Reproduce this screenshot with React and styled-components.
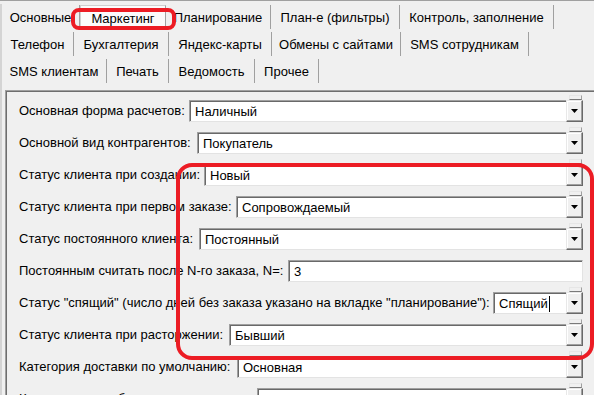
import React from 'react';
import styled, { createGlobalStyle } from 'styled-components';

const Global = createGlobalStyle`
  html, body { margin: 0; padding: 0; background: #f0f0f0; }
  body {
    font-family: "Liberation Sans", Arial, sans-serif;
    font-size: 13px;
    color: #000;
    overflow: hidden;
  }
  * { box-sizing: border-box; }
`;

const Root = styled.div`
  position: relative;
  width: 594px;
  height: 395px;
  overflow: hidden;
  background: #f0f0f0;
  border-top: 1px solid #a0a0a0;
`;

const Frame = styled.div`
  margin-top: 3px;
  height: 100%;
  border-left: 2px solid #d4d4d4;
`;

const TabRow = styled.div`
  display: flex;
  height: 27px;
`;

const Tab = styled.div`
  flex: 0 0 auto;
  width: ${(p) => p.$w}px;
  height: 24px;
  margin-top: 1px;
  padding-top: 2px;
  line-height: 21px;
  text-align: center;
  white-space: nowrap;
  border-right: 1px solid #a0a0a0;
  background: ${(p) => (p.$active ? '#fbfbfb' : 'transparent')};
  ${(p) => p.$active && 'border-left: 1px solid #d0d0d0; border-top: 1px solid #d0d0d0;'}
`;

const Panel = styled.div`
  margin: 5px 0 0 3px;
  border-top: 1px solid #a0a0a0;
  border-left: 1px solid #a0a0a0;
  box-shadow: inset 1px 1px 0 #6e6e6e;
  padding: 9px 11px 0 13px;
  display: flex;
  flex-direction: column;
  gap: 10px;
`;

const Row = styled.div`
  display: flex;
  align-items: center;
  height: 22px;
`;

const Label = styled.div`
  flex: 0 0 ${(p) => p.$w}px;
  white-space: nowrap;
  line-height: 22px;
  margin-top: -1px;
`;

const Combo = styled.div`
  flex: 1;
  display: flex;
  height: 22px;
  position: relative;
`;

const Field = styled.div`
  flex: 1;
  height: 22px;
  background: #fff;
  border-top: 1px solid #a0a0a0;
  border-left: 1px solid #a0a0a0;
  border-bottom: 1px solid #e3e3e3;
  border-right: ${(p) => (p.$plain ? '1px solid #e3e3e3' : 'none')};
  box-shadow: inset 1px 1px 0 #696969;
  padding: 1px 0 0 5px;
  line-height: 19px;
  white-space: nowrap;
  overflow: hidden;
  display: flex;
  align-items: center;
`;

const Caret = styled.span`
  display: inline-block;
  width: 1px;
  height: 16px;
  background: #000;
  margin-left: 1px;
`;

const DropButton = styled.div`
  position: relative;
  flex: 0 0 17px;
  height: 22px;
  background: #f0f0f0;
  border: 1px solid;
  border-color: #e8e8e8 #696969 #696969 #e8e8e8;
  box-shadow: inset -1px -1px 0 #a0a0a0, inset 1px 1px 0 #fff;
  display: flex;
  align-items: center;
  justify-content: center;
`;

const Nub = styled.div`
  position: absolute;
  top: -6px;
  left: 2px;
  right: 0;
  height: 5px;
  background: #f0f0f0;
  border: 1px solid #a0a0a0;
  border-top-color: #e6e6e6;
  border-left-color: #e6e6e6;
  border-bottom-color: #7a7a7a;
`;

const Annotation = styled.div`
  position: absolute;
  left: ${(p) => p.$x}px;
  top: ${(p) => p.$y}px;
  width: ${(p) => p.$w}px;
  height: ${(p) => p.$h}px;
  border: 4px solid #ec1c24;
  border-radius: ${(p) => p.$r}px;
  pointer-events: none;
`;

const Arrow = () => (
  <svg width="7" height="4" viewBox="0 0 7 4">
    <polygon points="0,0 7,0 3.5,4" fill="#000" />
  </svg>
);

const tabRows = [
  [
    ['Основные', 78],
    ['Маркетинг', 86, true],
    ['Планирование', 105],
    ['План-е (фильтры)', 129],
    ['Контроль, заполнение', 154],
  ],
  [
    ['Телефон', 72],
    ['Бухгалтерия', 95],
    ['Яндекс-карты', 103],
    ['Обмены с сайтами', 129],
    ['SMS сотрудникам', 128],
  ],
  [
    ['SMS клиентам', 105],
    ['Печать', 62],
    ['Ведомость', 86],
    ['Прочее', 64],
  ],
];

const fields = [
  { label: 'Основная форма расчетов:', w: 170, value: 'Наличный' },
  { label: 'Основной вид контрагентов:', w: 178, value: 'Покупатель' },
  { label: 'Статус клиента при создании:', w: 185, value: 'Новый' },
  { label: 'Статус клиента при первом заказе:', w: 217, value: 'Сопровождаемый' },
  { label: 'Статус постоянного клиента:', w: 180, value: 'Постоянный' },
  { label: 'Постоянным считать после N-го заказа, N=:', w: 269, value: '3', plain: true },
  {
    label: 'Статус "спящий" (число дней без заказа указано на вкладке "планирование"):',
    w: 474,
    value: 'Спящий',
    caret: true,
  },
  { label: 'Статус клиента при расторжении:', w: 210, value: 'Бывший' },
  { label: 'Категория доставки по умолчанию:', w: 218, value: 'Основная' },
  { label: 'Категория потребления по умолчанию:', w: 238, value: '' },
];

export default function App() {
  return (
    <Root>
      <Global />
      <Frame>
        {tabRows.map((row, i) => (
          <TabRow key={i}>
            {row.map(([name, w, active]) => (
              <Tab key={name} $w={w} $active={active}>
                {name}
              </Tab>
            ))}
          </TabRow>
        ))}
        <Panel>
          {fields.map((f) => (
            <Row key={f.label}>
              <Label $w={f.w}>{f.label}</Label>
              <Combo>
                <Field $plain={f.plain}>
                  {f.value}
                  {f.caret && <Caret />}
                </Field>
                {!f.plain && (
                  <DropButton>
                    <Nub />
                    <Arrow />
                  </DropButton>
                )}
              </Combo>
            </Row>
          ))}
        </Panel>
      </Frame>
      <Annotation $x={71} $y={7} $w={105} $h={22} $r={8} />
      <Annotation $x={176} $y={162} $w={418} $h={197} $r={16} />
    </Root>
  );
}
